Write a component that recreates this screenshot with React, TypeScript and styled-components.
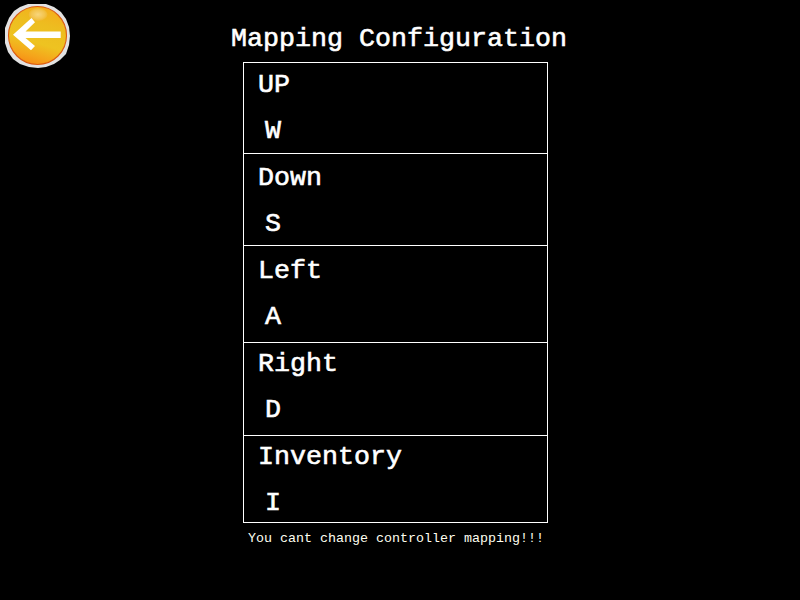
import React from "react";
import styled, { createGlobalStyle } from "styled-components";

const GlobalStyle = createGlobalStyle`
  body { margin: 0; background: #000; }
`;

const Screen = styled.main`
  box-sizing: border-box;
  display: grid;
  grid-template-columns: 230px 1fr;
  width: 800px;
  height: 600px;
  overflow: hidden;
  background: #000;
  color: #fff;
  font-family: "Liberation Mono", "Courier New", monospace;
  font-size: 26.667px;
`;

const BackButton = styled.button`
  width: 76px;
  height: 76px;
  padding: 0;
  border: 0;
  background: none;
  svg { display: block; }
`;

const Content = styled.section`
  display: flex;
  flex-direction: column;
  align-items: flex-start;
`;

const Title = styled.h1`
  margin: 19px 0 3px 1px;
  font-size: inherit;
  font-weight: 400;
  line-height: 40px;
  white-space: pre;
  -webkit-text-stroke: 0.6px #fff;
`;

const Mappings = styled.dl`
  box-sizing: border-box;
  width: 305px;
  margin: 0 0 0 13px;
  border: 1px solid #fff;
`;

const Mapping = styled.div<{ $height: number; $top: number }>`
  box-sizing: border-box;
  height: ${(p) => p.$height}px;
  padding: ${(p) => p.$top}px 0 0 14px;
  -webkit-text-stroke: 0.6px #fff;
  & + & { border-top: 1px solid #fff; }
`;

const Action = styled.dt`
  line-height: 40px;
`;

const Key = styled.dd`
  margin: 6px 0 0 7px;
  line-height: 40px;
`;

const Note = styled.p`
  margin: 6px 0 0 18px;
  font-size: 13.333px;
  line-height: 20px;
  color: #fffff0;
  white-space: pre;
`;

const mappings = [
  { action: "UP", key: "W", height: 90, top: 2 },
  { action: "Down", key: "S", height: 92, top: 4 },
  { action: "Left", key: "A", height: 97, top: 5 },
  { action: "Right", key: "D", height: 93, top: 1 },
  { action: "Inventory", key: "I", height: 87, top: 1 },
];

function BackIcon() {
  return (
    <svg width="76" height="76" viewBox="0 0 76 76">
      <defs>
        <linearGradient id="gold" x1="0.65" y1="0" x2="0.35" y2="1">
          <stop offset="0" stopColor="#f5ad1b" />
          <stop offset="0.3" stopColor="#edbd20" />
          <stop offset="0.62" stopColor="#eec321" />
          <stop offset="0.84" stopColor="#f5a51b" />
          <stop offset="1" stopColor="#f78c14" />
        </linearGradient>
        <radialGradient id="shine">
          <stop offset="0" stopColor="#f8d67c" />
          <stop offset="0.7" stopColor="#f3c44e" />
          <stop offset="1" stopColor="#f1b92c" />
        </radialGradient>
      </defs>
      <path d="M28 4H46L54 7L61 12L66 19L69 27L70 36L69 45L66 54L60 60L54 64L46 67L38 68L29 67L20 64L13 59L8 52L5 43V28L9 18L14 11L20 7Z" fill="#e2e2e2" />
      <circle cx="37.5" cy="35.5" r="29" fill="url(#gold)" stroke="#db5c12" strokeWidth="1.1" />
      <ellipse cx="38" cy="14.5" rx="9.5" ry="6.5" fill="url(#shine)" />
      <path d="M13 34.7L31.5 18L35 22.3L25.5 31.5H60.7V38H25.5L35 46L31 50.3Z" fill="#fff" />
    </svg>
  );
}

export default function App() {
  return (
    <>
      <GlobalStyle />
      <Screen>
        <BackButton aria-label="Back">
          <BackIcon />
        </BackButton>
        <Content>
          <Title>Mapping Configuration</Title>
          <Mappings>
            {mappings.map((m) => (
              <Mapping key={m.action} $height={m.height} $top={m.top}>
                <Action>{m.action}</Action>
                <Key>{m.key}</Key>
              </Mapping>
            ))}
          </Mappings>
          <Note>You cant change controller mapping!!!</Note>
        </Content>
      </Screen>
    </>
  );
}
